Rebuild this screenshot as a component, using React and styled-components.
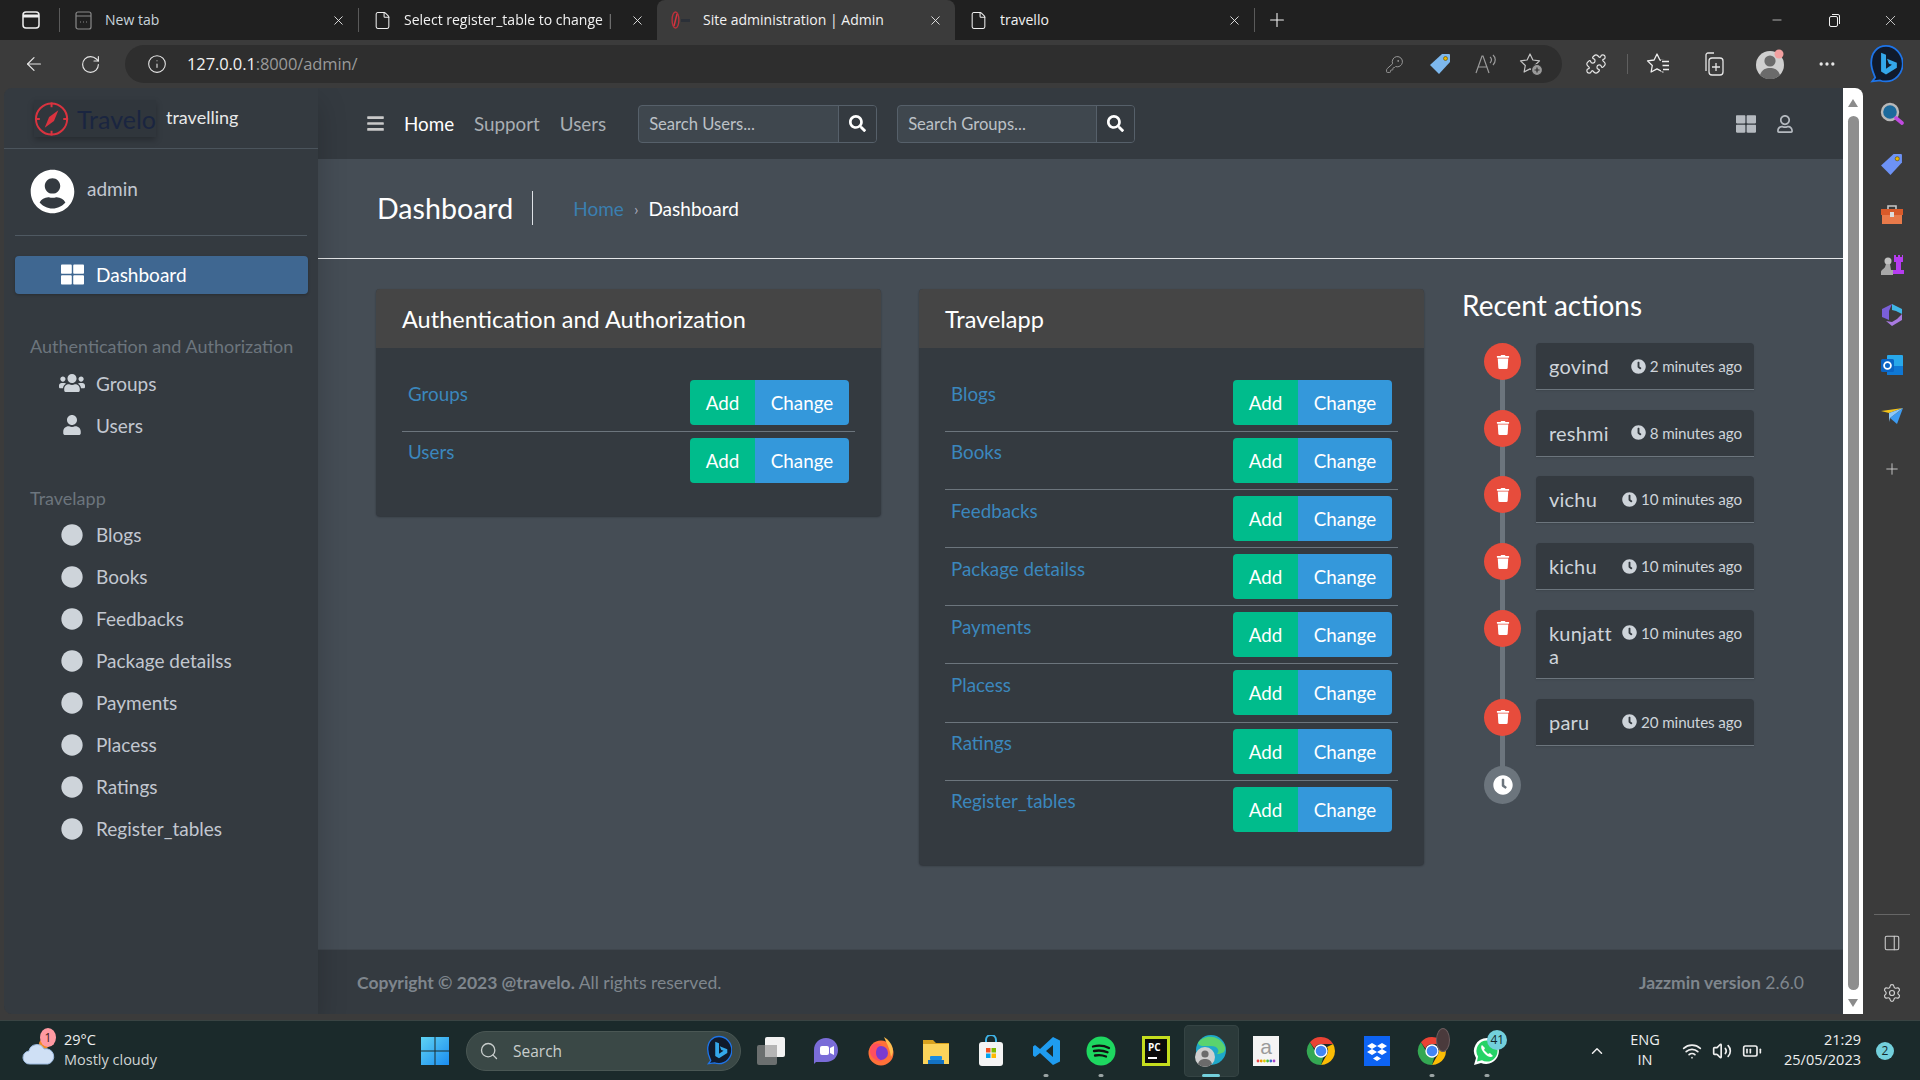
import React from "react";
import styled, { createGlobalStyle } from "styled-components";
import {
  FaBars, FaSearch, FaThLarge, FaRegUser, FaUserCircle, FaUsers, FaUser, FaCircle, FaTrash, FaClock,
} from "react-icons/fa";
import {
  X, Plus, Minus, ArrowLeft, RotateCw, Info, KeyRound, Puzzle, MoreHorizontal, File, PanelRight, Settings, ChevronUp, Wifi, Volume2, BatteryMedium, Search as LSearch,
} from "lucide-react";

const Global = createGlobalStyle`
  html, body { margin: 0; padding: 0; background: #3b3b3b; overflow: hidden; }
  * { box-sizing: border-box; }
  a { text-decoration: none; }
`;

const Root = styled.div`
  width: 1920px; height: 1080px; display: flex; flex-direction: column;
  background: #3b3b3b; font-family: Lato, sans-serif; overflow: hidden;
`;

/* ---------- browser tab strip ---------- */
const TabStrip = styled.div`
  height: 40px; flex: none; background: #202020; display: flex; align-items: stretch; color: #f0f0f0;
  font-family: "Open Sans", sans-serif; font-size: 14px;
`;
const TabLead = styled.div`
  width: 59px; display: flex; align-items: center; justify-content: center; padding-left: 2px;
`;
const Sep = styled.div`
  width: 1px; height: 24px; align-self: center; background: #5a5a5a; flex: none;
`;
const Tab = styled.div`
  width: ${(p) => p.$w || 298}px; flex: none; display: flex; align-items: center; gap: 12px;
  padding: 0 12px 0 14px; background: ${(p) => (p.$active ? "#3b3b3b" : "transparent")};
  border-radius: ${(p) => (p.$active ? "8px 8px 0 0" : "0")};
`;
const TabLabel = styled.span`
  flex: 1; white-space: nowrap; overflow: hidden; margin-top: -2px; color: ${(p) => (p.$dim ? "#c8d4dc" : "#f2f2f2")};
  ${(p) => p.$fade && "-webkit-mask-image: linear-gradient(90deg,#000 92%,transparent);"}
`;
const NewTab = styled.div`
  width: 44px; display: flex; align-items: center; justify-content: center;
`;
const WindowControls = styled.div`
  margin-left: auto; display: flex; align-items: center; padding-right: 1px;
`;
const WinBtn = styled.div`
  width: 57px; display: flex; justify-content: center; color: #eee;
`;

/* ---------- address bar ---------- */
const AddressBar = styled.div`
  height: 48px; flex: none; background: #3b3b3b; display: flex; align-items: center; color: #e6e6e6;
`;
const NavCell = styled.div`
  width: ${(p) => p.$w}px; flex: none; display: flex; align-items: center; justify-content: center;
`;
const UrlPill = styled.div`
  width: 1437px; height: 38px; background: #2e2e2e; border-radius: 19px; flex: none;
  display: flex; align-items: center; padding-left: 22px; font-family: "Open Sans", sans-serif; font-size: 16.5px;
`;
const UrlText = styled.span`
  color: #f2f2f2; margin: -2px 0 0 20px; letter-spacing: -0.1px;
  span { color: #9a9a9a; }
`;
const UrlTools = styled.div`
  margin-left: auto; display: flex; align-items: center; padding-right: 8px;
`;
const ToolCell = styled.div`
  width: 45.5px; display: flex; justify-content: center; color: #9b9b9b;
`;
const BarSep = styled.div`
  width: 1px; height: 20px; background: #5f5f5f; flex: none;
`;

/* ---------- main ---------- */
const Main = styled.div`
  height: 932px; flex: none; display: flex; padding-left: 4px;
`;
const Page = styled.div`
  width: 1840px; height: 926px; display: flex; border-radius: 8px 0 0 8px; overflow: hidden;
`;
const Sidebar = styled.aside`
  width: 314px; flex: none; background: #343a40; display: flex; flex-direction: column;
  box-shadow: 0 14px 28px rgba(0,0,0,.2); position: relative; z-index: 1;
`;
const Brand = styled.div`
  height: 61px; flex: none; border-bottom: 1px solid #4b545c; display: flex; align-items: flex-start;
  padding: 12px 0 0 30px;
`;
const BrandLogo = styled.div`
  width: 122px; height: 37px; flex: none; display: flex; align-items: center; gap: 8px;
  background: #30363c; box-shadow: 0 3px 6px rgba(0,0,0,.25); color: #1a2540; font-size: 25px;
`;
const BrandName = styled.span`
  color: #e8e8e8; font-size: 18px; margin: 6px 0 0 10px;
`;
const UserPanel = styled.div`
  margin: 0 11px; height: 87px; flex: none; border-bottom: 1px solid #4f5962; display: flex; align-items: flex-start;
  padding: 20px 0 0 15px; gap: 12px; color: #fff;
  span { color: #c2c7d0; font-size: 19px; margin-top: 8px; }
`;
const Nav = styled.nav`
  padding: 20px 10px 0 11px; display: flex; flex-direction: column;
`;
const ActiveItem = styled.div`
  height: 38px; background: #3f6791; border-radius: 4px; display: flex; align-items: center;
  padding: 0 0 2px 46px; gap: 12px; color: #fff; font-size: 19px; box-shadow: 0 1px 3px rgba(0,0,0,.24);
`;
const NavHeader = styled.div`
  height: 32px; margin-top: ${(p) => p.$mt}px; display: flex; align-items: center; padding-left: 15px;
  color: #6c757d; font-size: 18px; white-space: nowrap;
`;
const NavItem = styled.div`
  height: 42px; flex: none; display: flex; align-items: center; color: #c2c7d0; font-size: 19px;
`;
const NavIcon = styled.span`
  width: 70px; padding-left: 44px; margin-right: 11px; display: flex; justify-content: center; flex: none; color: #ced4da;
`;

const Content = styled.div`
  flex: 1; min-width: 0; display: flex; flex-direction: column; background: #454d55;
`;
const TopBar = styled.header`
  height: 71px; flex: none; background: #343a40; display: flex; align-items: center; padding-left: 48px; padding-right: 50px;
`;
const Burger = styled.span`
  color: #c9c9c9; display: flex; margin-right: 19px;
`;
const TopLink = styled.a`
  color: ${(p) => (p.$on ? "#fff" : "#a9aeb3")}; font-size: 18.8px; margin-right: 20px; white-space: nowrap;
`;
const SearchBox = styled.div`
  width: ${(p) => p.$w}px; height: 38px; flex: none; margin-left: ${(p) => p.$ml}px; display: flex; background: #3f474e;
  border: 1px solid #56606a; border-radius: 4px; color: #fff;
`;
const SearchText = styled.div`
  flex: 1; color: #bcc1c6; font-size: 16.6px; display: flex; align-items: center; padding-left: 10px;
`;
const SearchBtn = styled.div`
  width: 38px; background: #343a40; border-left: 1px solid #56606a; border-radius: 0 3px 3px 0;
  display: flex; align-items: center; justify-content: center;
`;
const TopRight = styled.div`
  margin-left: auto; display: flex; align-items: center; gap: 20px; color: #b5bac0;
`;
const TitleRow = styled.div`
  height: 100px; flex: none; border-bottom: 1px solid #e4e6e8; display: flex; align-items: center; padding: 0 0 2px 59px;
`;
const PageTitle = styled.h1`
  margin: 0; font-weight: 400; font-size: 28.6px; color: #fff; padding-right: 19px; line-height: 34px;
  border-right: 1px solid #dee2e6; height: 34px; display: flex; align-items: center;
`;
const Crumbs = styled.div`
  margin: 1px 0 0 40px; display: flex; align-items: center; font-size: 19px; color: #fff;
  a { color: #3a7fb0; }
  i { color: #aab; font-style: normal; margin: 0 10px; font-size: 16px; }
`;
const Body = styled.main`
  flex: 1; min-height: 0; display: flex; align-items: flex-start; padding: 30px 0 0 58px;
`;
const Card = styled.section`
  width: 505px; flex: none; margin-right: 38px; background: #343a40; border-radius: 4px; overflow: hidden;
  box-shadow: 0 1px 2px rgba(0,0,0,.35); padding-bottom: 26px;
`;
const CardHead = styled.h2`
  margin: 0 0 26px; height: 59px; background: #454545; color: #fff; font-size: 23.5px; font-weight: 400;
  display: flex; align-items: center; padding: 0 26px;
`;
const Row = styled.div`
  margin: 0 26px; height: 58.1px; padding: 6px; display: flex; justify-content: space-between; align-items: flex-start;
  border-bottom: ${(p) => (p.$last ? "none" : "1px solid #6c757d")};
`;
const RowLink = styled.a`
  color: #3b87bd; font-size: 18.8px; line-height: 24px; margin-top: 2.4px;
`;
const BtnGroup = styled.div`
  display: flex; height: 45px; border-radius: 4px; overflow: hidden; flex: none;
`;
const Btn = styled.div`
  width: ${(p) => p.$w}px; display: flex; align-items: center; justify-content: center;
  background: ${(p) => p.$bg}; color: #fff; font-size: 18.8px;
`;
const Recent = styled.div`
  width: 292px; flex: none;
`;
const RecentTitle = styled.h3`
  margin: -1px 0 0; color: #fff; font-weight: 400; font-size: 28px; line-height: 34px; height: 55px;
`;
const Timeline = styled.div`
  position: relative; padding-left: 22px; display: flex; flex-direction: column;
  &::before { content: ""; position: absolute; left: 38px; top: 4px; bottom: 4px; width: 5px; background: #6c757d; }
`;
const TimeRow = styled.div`
  display: flex; align-items: flex-start; margin-bottom: 19.7px; position: relative; gap: 15px;
`;
const Dot = styled.div`
  width: 37px; height: ${(p) => (p.$tall ? 38 : 37)}px; border-radius: 50%; flex: none; display: flex; align-items: center; justify-content: center;
  background: ${(p) => p.$bg}; color: #fff; position: relative;
`;
const Entry = styled.div`
  width: 218px; min-height: 47px; background: #343a40; border-radius: 4px 4px 0 0; border-bottom: 1px solid #6c757d;
  display: flex; padding: 12px 12px 0 13px; color: #ced4da; box-shadow: 0 1px 2px rgba(0,0,0,.1);
`;
const EntryName = styled.div`
  flex: 1; min-width: 0; font-size: 20px; line-height: 23px; padding-bottom: 10.5px; word-break: break-all; letter-spacing: .2px;
`;
const EntryTime = styled.div`
  flex: none; display: flex; align-items: center; gap: 3.5px; font-size: 15.2px; height: 20px; margin: 1px 0 0 8px; letter-spacing: -0.1px;
`;
const Footer = styled.footer`
  height: 65px; flex: none; margin-top: auto; background: #343a40; border-top: 1px solid #3f464d;
  display: flex; align-items: center; justify-content: space-between; padding: 0 40px 0 39px;
  color: #7f868d; font-size: 17.5px; b { color: #7f868d; font-weight: 700; }
`;

/* ---------- scrollbar + rail ---------- */
const ScrollBar = styled.div`
  width: 20px; height: 926px; flex: none; background: #fff; border-radius: 0 8px 0 0; display: flex; flex-direction: column; align-items: center; margin-left: -1px;
  padding: 11px 0 7px;
`;
const Arrow = styled.div`
  width: 0; height: 0; border-left: 5px solid transparent; border-right: 5px solid transparent;
  ${(p) => (p.$down ? "border-top: 8px solid #8b8b8b;" : "border-bottom: 8px solid #8b8b8b;")}
`;
const Thumb = styled.div`
  width: 11px; flex: 1; margin: 9px 0; background: #8e8e8e; border-radius: 6px;
`;
const Rail = styled.div`
  width: 57px; flex: none; display: flex; flex-direction: column; align-items: center; height: 930px; color: #cfcfcf; padding-top: 1px;
`;
const RailCell = styled.div`
  height: ${(p) => p.$h || 50.3}px; flex: none; display: flex; align-items: center; justify-content: center; width: 100%;
`;
const RailBottom = styled.div`
  margin-top: auto; width: 100%; display: flex; flex-direction: column; align-items: center;
`;
const RailLine = styled.div`
  width: 36px; height: 1px; background: #666; margin-bottom: 2px;
`;

/* ---------- taskbar ---------- */
const Taskbar = styled.div`
  height: 60px; flex: none; background: #1b2a2b; border-top: 1px solid #3a4443; display: flex; align-items: center; color: #eee;
  font-family: "Open Sans", sans-serif; position: relative;
`;
const Weather = styled.div`
  width: 405px; flex: none; padding-left: 22px; display: flex; align-items: center; position: relative; height: 100%;
`;
const WeatherBadge = styled.span`
  position: absolute; left: 40px; top: 7px; width: 16px; height: 19px; border-radius: 50%; background: #ff9aa2; color: #3a1a1a;
  font-size: 12px; display: flex; align-items: center; justify-content: center;
`;
const WeatherText = styled.div`
  margin: -2px 0 0 8px; font-size: 14.5px; line-height: 20px; div:last-child { color: #cfd4d4; }
`;
const WinLogo = styled.div`
  width: 61px; flex: none; display: flex; justify-content: flex-start; padding-left: 15px;
`;
const SearchPill = styled.div`
  width: 275px; height: 40px; flex: none; background: #3a4846; border: 1px solid #4a5754; border-radius: 20px; display: flex; align-items: center;
  padding: 0 8px 0 12px; gap: 14px; font-size: 15.5px; color: #c9cecd;
  svg:last-child { margin-left: auto; }
`;
const AppsRow = styled.div`
  display: flex; margin-left: 2px;
`;
const AppSlot = styled.div`
  width: 55.1px; height: 52px; flex: none; display: flex; align-items: center; justify-content: center; position: relative;
  border-radius: 5px; ${(p) => p.$on && "background: #2b3a3a; box-shadow: inset 0 0 0 1px #354444;"}
`;
const Running = styled.span`
  position: absolute; left: 50%; bottom: 0; transform: translateX(-50%); height: 3px; border-radius: 2px;
  width: ${(p) => (p.$on ? 18 : 5)}px; background: ${(p) => (p.$on ? "#73d0dc" : "#9aa3a3")};
`;
const CountBadge = styled.span`
  position: absolute; right: 7px; top: 5px; min-width: 20px; height: 20px; border-radius: 50%; background: #73d0dc; color: #14282a;
  font-size: 12px; display: flex; align-items: center; justify-content: center;
`;
const AvatarBadge = styled.span`
  position: absolute; right: 9px; top: 3px; width: 14px; height: 24px; border-radius: 50%; background: #4a3a3c;
  border: 1px solid #6b5b5d;
`;
const Tray = styled.div`
  margin-left: auto; display: flex; align-items: center; padding-right: 26px; font-size: 14px;
`;
const Lang = styled.div`
  width: 48px; margin-left: 15px; text-align: center; line-height: 20px; font-size: 14.5px; margin-top: -2px;
`;
const TrayIcons = styled.div`
  display: flex; gap: 10px; margin-left: 13px; width: 90px;
`;
const Clock = styled.div`
  width: 88px; margin: -2px 0 0 1px; text-align: right; line-height: 20px; font-size: 14.5px;
`;
const Notif = styled.span`
  width: 18px; height: 18px; border-radius: 50%; background: #73d0dc; color: #14282a; font-size: 12px;
  display: flex; align-items: center; justify-content: center; margin-left: 15px;
`;

/* ---------- drawn logos ---------- */
const Compass = () => (
  <svg width="36" height="36" viewBox="0 0 36 36" fill="none" stroke="#d9333f" strokeWidth="2">
    <circle cx="18" cy="18" r="16" />
    <path d="M18 1v5M18 30v5M1 18h5M30 18h5" />
    <path d="M25 9 L20.5 20 L11 27 L15.5 16 Z" fill="#d9333f" stroke="none" />
  </svg>
);
const Favicon = () => (
  <svg width="20" height="20" viewBox="0 0 20 20" fill="none">
    <ellipse cx="4.5" cy="10" rx="3.4" ry="8" stroke="#b8323c" strokeWidth="1.4" />
    <path d="M6 4 3 16" stroke="#d9333f" strokeWidth="1.4" />
    <path d="M10 9h9v3h-9z" fill="#2b3038" />
  </svg>
);
const BingLogo = ({ s = 34 }) => (
  <svg width={s} height={s * 1.16} viewBox="0 0 34 40">
    <path d="M17 2C8 2 2 9 2 19c0 7 3 12 4 15l-3 4 8-1c2 1 4 1 6 1 9 0 17-8 17-18S26 2 17 2Z" fill="#101a2c" stroke="#1e74e8" strokeWidth="1.8" />
    <path d="M12 9l5 2v14l6-4-3-1-2-5 10 4v5l-11 7-5-3Z" fill="#34a7ea" />
  </svg>
);
const TagIcon = ({ c = "#7db8ee", s = 22 }) => (
  <svg width={s} height={s} viewBox="0 0 22 22">
    <path d="M13 1h7a1 1 0 0 1 1 1v7L10 21 1 12Z" fill={c} />
    <circle cx="16.5" cy="5.5" r="2" fill="#e8b400" stroke="#5a4a00" strokeWidth=".6" />
  </svg>
);
const ProfileIcon = () => (
  <svg width="29" height="30" viewBox="0 0 29 30">
    <circle cx="14" cy="16" r="14" fill="#cfcfcf" />
    <circle cx="14" cy="12" r="5.6" fill="#6b6b6b" />
    <path d="M4 26c2-6 6-7 10-7s8 1 10 7a14 14 0 0 1-20 0Z" fill="#6b6b6b" />
    <circle cx="23" cy="5" r="4.5" fill="#f2a0a0" />
  </svg>
);
const STAR = "M11 2 13.9 8 20.500 8.900 15.700 13.500 16.900 20 11 16.900 5.100 20 6.300 13.500 1.500 8.900 8.100 8Z";
const FavStar = () => (
  <svg width="24" height="24" viewBox="0 0 24 24" fill="none" stroke="#c5c5c5" strokeWidth="1.2" strokeLinejoin="round">
    <path d={STAR} />
    <circle cx="18" cy="18" r="5.500" fill="#9a9a9a" stroke="#2e2e2e" />
    <path d="M18 15.500v5M15.500 18h5" stroke="#2e2e2e" />
  </svg>
);
const FavoritesIcon = () => (
  <svg width="24" height="24" viewBox="0 0 24 24" fill="none" stroke="#eee" strokeWidth="1.3" strokeLinejoin="round">
    <path d={STAR} />
    <path d="M15 9.500h9M15 13.500h9M15 17.500h9" stroke="#3b3b3b" strokeWidth="4" />
    <path d="M16 9.500h7M16.500 13.500h6.500M17 17.500h6" />
  </svg>
);
const FaviconPage = () => <File size={19} strokeWidth={1.3} color="#f0f0f0" />;
const GridMark = ({ s = 26 }) => (
  <svg width={s} height={s} viewBox="0 0 30 30">
    <defs><linearGradient id="w" x1="0" y1="0" x2="1" y2="1"><stop offset="0" stopColor="#5fd3f3" /><stop offset="1" stopColor="#1a8cf0" /></linearGradient></defs>
    <path d="M1 1h13.5v13.5H1zM15.5 1H29v13.5H15.5zM1 15.5h13.5V29H1zM15.5 15.5H29V29H15.5z" fill="url(#w)" />
  </svg>
);
const Chrome = ({ s = 30 }) => (
  <svg width={s} height={s} viewBox="0 0 30 30">
    <path d="M15 1a14 14 0 0 1 12.100 7H15a7 7 0 0 0-6.600 4.600L3.900 6.300A14 14 0 0 1 15 1Z" fill="#ea4335" />
    <path d="M27.100 8A14 14 0 0 1 15 29l5.900-10.500a7 7 0 0 0 .1-7.500Z" fill="#fbbc04" />
    <path d="M15 29A14 14 0 0 1 3.900 6.300L9 15a7 7 0 0 0 8.500 5.500Z" fill="#34a853" />
    <circle cx="15" cy="15" r="6" fill="#4285f4" stroke="#fff" strokeWidth="1.400" />
  </svg>
);
const MeetIcon = () => (
  <svg width="26" height="30" viewBox="0 0 26 30">
    <path d="M13 2c7 0 12 5 12 12s-5 12-12 12H3l-2 2V14C1 7 6 2 13 2Z" fill="#7a6cd8" />
    <rect x="7" y="10" width="9" height="9" rx="2" fill="#fff" /><path d="M17 12l4-2v9l-4-2Z" fill="#fff" />
  </svg>
);
const FirefoxIcon = () => (
  <svg width="30" height="30" viewBox="0 0 30 30">
    <circle cx="15" cy="17" r="12.500" fill="#ff7139" />
    <path d="M18 1c5 3 9 8 9 14 0 2-1 4-2 6-1-8-4-13-7-20Z" fill="#ffbd4f" />
    <circle cx="15" cy="17" r="7" fill="#7a3ad0" />
    <path d="M6 9c3-2 7-2 10 0-3 0-6 3-6 8 0 4 3 7 7 8-7 1-13-4-13-10 0-2 1-4 2-6Z" fill="#ff4f5e" />
  </svg>
);
const FolderIcon = () => (
  <svg width="30" height="30" viewBox="0 0 30 30">
    <path d="M2 4h10l3 3h13v4H2Z" fill="#d9a21e" /><rect x="2" y="8" width="26" height="20" fill="#fbd35a" />
    <rect x="9" y="20" width="12" height="4" rx="1" fill="#1a8ce0" /><rect x="7" y="24" width="16" height="4" fill="#1372c4" />
  </svg>
);
const StoreIcon = () => (
  <svg width="28" height="32" viewBox="0 0 28 32">
    <path d="M9 9V5a5 5 0 0 1 10 0v4" fill="none" stroke="#3fb4e8" strokeWidth="2" />
    <rect x="2" y="7" width="24" height="24" rx="3" fill="#f4f4f4" />
    <rect x="9" y="13" width="4.500" height="4.500" fill="#f25022" /><rect x="14.500" y="13" width="4.500" height="4.500" fill="#7fba00" />
    <rect x="9" y="18.500" width="4.500" height="4.500" fill="#00a4ef" /><rect x="14.500" y="18.500" width="4.500" height="4.500" fill="#ffb900" />
  </svg>
);
const VsCode = () => (
  <svg width="29" height="30" viewBox="0 0 29 30">
    <path d="M21 1l7 3.500v21L21 29 8 17l-5 4-2-1.500v-9L3 9l5 4Zm0 8-7 6 7 6Z" fill="#1f9cf0" />
  </svg>
);
const Spotify = () => (
  <svg width="30" height="30" viewBox="0 0 30 30">
    <circle cx="15" cy="15" r="14.500" fill="#1ed760" />
    <path d="M7 10.500c6-1.500 11-1 16 1.500M8 15c5-1 9-.7 13.500 1.300M9 19.500c4-.8 7.500-.5 11 1" stroke="#111" strokeWidth="2.300" strokeLinecap="round" fill="none" />
  </svg>
);
const PyCharm = () => (
  <svg width="28" height="30" viewBox="0 0 28 30">
    <path d="M0 0h28v30H0z" fill="#c5dd1e" /><path d="M3 3h22v24H3z" fill="#0b0b0b" />
    <text x="6" y="15" fontSize="10" fontWeight="700" fill="#fff" fontFamily="Open Sans, sans-serif">PC</text>
    <rect x="6" y="21" width="9" height="2" fill="#fff" />
  </svg>
);
const EdgeIcon = () => (
  <svg width="34" height="36" viewBox="0 0 34 36">
    <circle cx="17" cy="17" r="15" fill="#1fa8c9" /><path d="M4 10C9 1 26 1 31 14c1 5-3 7-8 7 3-3 1-8-6-8S5 14 4 10Z" fill="#5ad36e" />
    <circle cx="11" cy="24" r="10" fill="#cfcfcf" /><circle cx="11" cy="21" r="3.600" fill="#6b6b6b" /><path d="M4 31c1-4 4-5 7-5s6 1 7 5a10 10 0 0 1-14 0Z" fill="#6b6b6b" />
  </svg>
);
const AmazonIcon = () => (
  <svg width="26" height="30" viewBox="0 0 26 30">
    <rect width="26" height="30" fill="#f4f4f4" />
    <text x="13" y="18" textAnchor="middle" fontSize="21" fill="#9a9a9a" fontFamily="Liberation Sans, sans-serif">a</text>
    {["#e44", "#e90", "#dc0", "#4b4", "#36c", "#a4c"].map((c, i) => <circle key={c} cx={5 + i * 3.200} cy="25" r="1.400" fill={c} />)}
  </svg>
);
const Dropbox = () => (
  <svg width="26" height="30" viewBox="0 0 26 30">
    <rect width="26" height="30" fill="#0d63f3" />
    <path d="M8 7l5 3-5 3-5-3Zm10 0 5 3-5 3-5-3ZM8 13l5 3-5 3-5-3Zm10 0 5 3-5 3-5-3ZM13 20l4 2.500-4 2.500-4-2.500Z" fill="#fff" />
  </svg>
);
const WhatsApp = () => (
  <svg width="30" height="32" viewBox="0 0 30 32">
    <path d="M15 3a13 13 0 0 0-11 20L2 30l7-2A13 13 0 1 0 15 3Z" fill="#fff" />
    <path d="M15 5.500a10.500 10.500 0 0 0-9 16l-1 5 5-1.300A10.500 10.500 0 1 0 15 5.500Z" fill="#25d366" />
    <path d="M10 10c-2 2 0 6 3 9s6 4 8 2l-3-3-2 1-4-4 1-2Z" fill="#fff" />
  </svg>
);
const CloudIcon = () => (
  <svg width="34" height="30" viewBox="0 0 34 30">
    <circle cx="22" cy="8" r="5" fill="#f08a24" />
    <path d="M8 28a6.500 6.500 0 0 1-1-13 8 8 0 0 1 15-2 7.500 7.500 0 0 1 4 15Z" fill="#cfe0f5" stroke="#9dbbe0" />
  </svg>
);
const TaskView = () => (
  <svg width="30" height="30" viewBox="0 0 30 30">
    <rect x="1" y="9" width="20" height="20" rx="2" fill="#6b6f6f" /><rect x="9" y="1" width="20" height="20" rx="2" fill="#f2f2f2" /><rect x="9" y="9" width="12" height="12" fill="#b5b5b5" />
  </svg>
);
const RailSearch = () => (
  <svg width="24" height="24" viewBox="0 0 24 24">
    <circle cx="10" cy="10" r="8" fill="#1c6a9c" stroke="#b8b8b8" strokeWidth="2.400" />
    <path d="M16 16l6 5" stroke="#c04ae0" strokeWidth="3.600" strokeLinecap="round" />
  </svg>
);
const Toolbox = () => (
  <svg width="24" height="22" viewBox="0 0 24 22">
    <path d="M8 5V2h8v3" fill="none" stroke="#c8c8c8" strokeWidth="1.600" />
    <rect x="1" y="5" width="22" height="6" fill="#d85a2a" /><rect x="2" y="11" width="20" height="9" fill="#e87a4a" />
    <rect x="10" y="8" width="4" height="5" fill="#ddd" />
  </svg>
);
const Chess = () => (
  <svg width="24" height="24" viewBox="0 0 24 24">
    <path d="M14 2h2v2h2V2h2v2h2V2h1v7h-2v8h3v4H13v-4h3V9h-2Z" fill="#b63cf0" />
    <circle cx="8" cy="8" r="3.500" fill="#c0c0c0" /><path d="M6 11h4l1 6h2v5H1v-3c0-2 3-3 4-5Z" fill="#a8a8a8" />
  </svg>
);
const Copilot = () => (
  <svg width="22" height="24" viewBox="0 0 22 24">
    <path d="M11 1 21 6v5l-6-3-4-1Z" fill="#3fb6e8" /><path d="M1 6l10-5-3 7v9l-7-3Z" fill="#7a5fd8" />
    <path d="M21 11v6l-10 6-6-5 6 1 5-3Z" fill="#a87ae0" />
  </svg>
);
const Outlook = () => (
  <svg width="22" height="21" viewBox="0 0 22 21">
    <rect x="6" y="0" width="16" height="20" rx="1" fill="#28a8ea" /><path d="M6 11l16 0v9H6Z" fill="#0f78d4" />
    <rect x="0" y="4" width="13" height="13" rx="1.500" fill="#0a64c4" />
    <circle cx="6.500" cy="10.500" r="3.400" fill="none" stroke="#fff" strokeWidth="1.800" />
  </svg>
);
const SendIcon = () => (
  <svg width="22" height="16" viewBox="0 0 22 16">
    <path d="M0 3 22 0 8 5Z" fill="#f5c518" /><path d="M22 0 16 16 9 10Z" fill="#3d9bf0" /><path d="M8 5 22 0 9 10l-1 4Z" fill="#8cc8f8" />
  </svg>
);

const authRows = ["Groups", "Users"];
const appRows = ["Blogs", "Books", "Feedbacks", "Package detailss", "Payments", "Placess", "Ratings", "Register_tables"];
const actions = [
  ["govind", "2 minutes ago"], ["reshmi", "8 minutes ago"], ["vichu", "10 minutes ago"],
  ["kichu", "10 minutes ago"], ["kunjatta", "10 minutes ago"], ["paru", "20 minutes ago"],
];

const AdminRow = ({ name, last }) => (
  <Row $last={last}>
    <RowLink>{name}</RowLink>
    <BtnGroup>
      <Btn $w={65} $bg="#00bc8c">Add</Btn>
      <Btn $w={94} $bg="#3498db">Change</Btn>
    </BtnGroup>
  </Row>
);

export default function App() {
  return (
    <Root>
      <Global />
      <TabStrip>
        <TabLead>
          <svg width="18" height="18" viewBox="0 0 18 18" fill="none" stroke="#eee" strokeWidth="1.500"><rect x="1" y="1" width="16" height="16" rx="3" /><path d="M1 5h16" strokeWidth="3" /></svg>
        </TabLead>
        <Sep />
        <Tab $w={298}>
          <svg width="19" height="19" viewBox="0 0 19 19" fill="none" stroke="#8a8a8a" strokeWidth="1.200"><rect x="2" y="1" width="15" height="17" rx="2" /><path d="M2 5h15M6 11h1M9 11h1M12 11h1" /></svg>
          <TabLabel $dim>New tab</TabLabel>
          <X size={15} strokeWidth={1.400} />
        </Tab>
        <Sep />
        <Tab $w={298}>
          <FaviconPage />
          <TabLabel $fade>Select register_table to change | Admin</TabLabel>
          <X size={15} strokeWidth={1.400} />
        </Tab>
        <Tab $active $w={298}>
          <Favicon />
          <TabLabel>Site administration | Admin</TabLabel>
          <X size={15} strokeWidth={1.400} />
        </Tab>
        <Tab $w={299}>
          <FaviconPage />
          <TabLabel>travello</TabLabel>
          <X size={15} strokeWidth={1.400} />
        </Tab>
        <Sep />
        <NewTab><Plus size={22} strokeWidth={1.200} /></NewTab>
        <WindowControls>
          <WinBtn><Minus size={14} strokeWidth={1.200} /></WinBtn>
          <WinBtn>
            <svg width="14" height="14" viewBox="0 0 14 14" fill="none" stroke="#eee"><rect x="2.500" y="3.500" width="8" height="10" rx="1.500" /><path d="M5 1.500h6a1.500 1.500 0 0 1 1.500 1.500v8" /></svg>
          </WinBtn>
          <WinBtn><X size={17} strokeWidth={1.100} /></WinBtn>
        </WindowControls>
      </TabStrip>

      <AddressBar>
        <NavCell $w={68}><ArrowLeft size={22} strokeWidth={1.300} /></NavCell>
        <NavCell $w={44}><RotateCw size={21} strokeWidth={1.300} /></NavCell>
        <NavCell $w={13} />
        <UrlPill>
          <Info size={20} strokeWidth={1.300} />
          <UrlText>127.0.0.1<span>:8000/admin/</span></UrlText>
          <UrlTools>
            <ToolCell><KeyRound size={19} strokeWidth={1.200} /></ToolCell>
            <ToolCell><TagIcon /></ToolCell>
            <ToolCell><svg width="24" height="22" viewBox="0 0 24 22" fill="none" stroke="#9b9b9b" strokeWidth="1.200"><path d="M2 20 8 3h1l6 17M4.500 14h9" /><path d="M16 4c2 1.500 2 4 0 6M19 2c3 2.500 3 7 0 10" /></svg></ToolCell>
            <ToolCell><FavStar /></ToolCell>
          </UrlTools>
        </UrlPill>
        <NavCell $w={17} />
        <NavCell $w={34}><Puzzle size={22} strokeWidth={1.300} /></NavCell>
        <NavCell $w={28}><BarSep /></NavCell>
        <NavCell $w={34}><FavoritesIcon /></NavCell>
        <NavCell $w={76}>
          <svg width="24" height="26" viewBox="0 0 24 26" fill="none" stroke="#e6e6e6" strokeWidth="1.300"><path d="M5 20V4a2 2 0 0 1 2-2h6" /><rect x="8" y="7" width="14" height="17" rx="3" /><path d="M15 12v8M11 16h8" /></svg>
        </NavCell>
        <NavCell $w={38}><ProfileIcon /></NavCell>
        <NavCell $w={76}><MoreHorizontal size={20} strokeWidth={2} /></NavCell>
        <NavCell $w={42}><BingLogo /></NavCell>
      </AddressBar>

      <Main>
        <Page>
          <Sidebar>
            <Brand>
              <BrandLogo><Compass />Travelo</BrandLogo>
              <BrandName>travelling</BrandName>
            </Brand>
            <UserPanel>
              <FaUserCircle size={45} color="#fff" />
              <span>admin</span>
            </UserPanel>
            <Nav>
              <ActiveItem><FaThLarge size={23} />Dashboard</ActiveItem>
              <NavHeader $mt={36}>Authentication and Authorization</NavHeader>
              <NavItem><NavIcon><FaUsers size={28} /></NavIcon>Groups</NavItem>
              <NavItem><NavIcon><FaUser size={20} /></NavIcon>Users</NavItem>
              <NavHeader $mt={35.6}>Travelapp</NavHeader>
              {appRows.map((n) => (
                <NavItem key={n}><NavIcon><FaCircle size={22} /></NavIcon>{n}</NavItem>
              ))}
            </Nav>
          </Sidebar>
          <Content>
            <TopBar>
              <Burger><FaBars size={19} /></Burger>
              <TopLink $on>Home</TopLink>
              <TopLink>Support</TopLink>
              <TopLink>Users</TopLink>
              <SearchBox $w={239} $ml={12}><SearchText>Search Users...</SearchText><SearchBtn><FaSearch size={17} /></SearchBtn></SearchBox>
              <SearchBox $w={238} $ml={20}><SearchText>Search Groups...</SearchText><SearchBtn><FaSearch size={17} /></SearchBtn></SearchBox>
              <TopRight><FaThLarge size={20} /><FaRegUser size={18} /></TopRight>
            </TopBar>
            <TitleRow>
              <PageTitle>Dashboard</PageTitle>
              <Crumbs><a>Home</a><i>›</i>Dashboard</Crumbs>
            </TitleRow>
            <Body>
              <Card>
                <CardHead>Authentication and Authorization</CardHead>
                {authRows.map((n, i) => <AdminRow key={n} name={n} last={i === authRows.length - 1} />)}
              </Card>
              <Card>
                <CardHead>Travelapp</CardHead>
                {appRows.map((n, i) => <AdminRow key={n} name={n} last={i === appRows.length - 1} />)}
              </Card>
              <Recent>
                <RecentTitle>Recent actions</RecentTitle>
                <Timeline>
                  {actions.map(([n, t]) => (
                    <TimeRow key={n}>
                      <Dot $bg="#e74c3c"><FaTrash size={14} /></Dot>
                      <Entry>
                        <EntryName>{n}</EntryName>
                        <EntryTime><FaClock size={15} />{t}</EntryTime>
                      </Entry>
                    </TimeRow>
                  ))}
                  <Dot $tall $bg="#6c757d"><FaClock size={20} /></Dot>
                </Timeline>
              </Recent>
            </Body>
            <Footer>
              <div><b>Copyright © 2023 @travelo.</b> All rights reserved.</div>
              <div><b>Jazzmin version</b> 2.6.0</div>
            </Footer>
          </Content>
        </Page>
        <ScrollBar><Arrow /><Thumb /><Arrow $down /></ScrollBar>
        <Rail>
          <RailCell><RailSearch /></RailCell>
          <RailCell><TagIcon c="#6d92f5" s={23} /></RailCell>
          <RailCell><Toolbox /></RailCell>
          <RailCell><Chess /></RailCell>
          <RailCell><Copilot /></RailCell>
          <RailCell><Outlook /></RailCell>
          <RailCell><SendIcon /></RailCell>
          <RailCell $h={55}><Plus size={18} strokeWidth={1.200} /></RailCell>
          <RailBottom>
            <RailLine />
            <RailCell><PanelRight size={18} strokeWidth={1.400} /></RailCell>
            <RailCell><Settings size={20} strokeWidth={1.400} /></RailCell>
          </RailBottom>
        </Rail>
      </Main>

      <Taskbar>
        <Weather>
          <CloudIcon />
          <WeatherBadge>1</WeatherBadge>
          <WeatherText><div>29°C</div><div>Mostly cloudy</div></WeatherText>
        </Weather>
        <WinLogo><GridMark s={30} /></WinLogo>
        <SearchPill>
          <LSearch size={20} strokeWidth={1.600} />
          Search
          <BingLogo s={26} />
        </SearchPill>
        <AppsRow>
          <AppSlot><TaskView /></AppSlot>
          <AppSlot><MeetIcon /></AppSlot>
          <AppSlot><FirefoxIcon /></AppSlot>
          <AppSlot><FolderIcon /></AppSlot>
          <AppSlot><StoreIcon /></AppSlot>
          <AppSlot><VsCode /><Running /></AppSlot>
          <AppSlot><Spotify /><Running /></AppSlot>
          <AppSlot><PyCharm /></AppSlot>
          <AppSlot $on><EdgeIcon /><Running $on /></AppSlot>
          <AppSlot><AmazonIcon /></AppSlot>
          <AppSlot><Chrome /></AppSlot>
          <AppSlot><Dropbox /></AppSlot>
          <AppSlot><Chrome /><AvatarBadge /><Running /></AppSlot>
          <AppSlot><WhatsApp /><CountBadge>41</CountBadge><Running /></AppSlot>
        </AppsRow>
        <Tray>
          <ChevronUp size={18} />
          <Lang>ENG<br />IN</Lang>
          <TrayIcons><Wifi size={20} /><Volume2 size={20} /><BatteryMedium size={20} /></TrayIcons>
          <Clock>21:29<br />25/05/2023</Clock>
          <Notif>2</Notif>
        </Tray>
      </Taskbar>
    </Root>
  );
}
